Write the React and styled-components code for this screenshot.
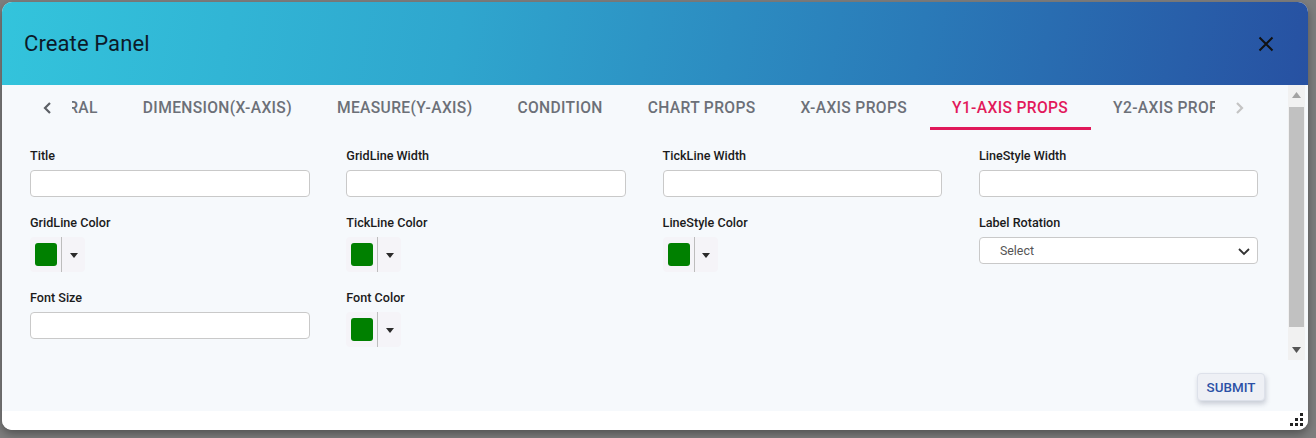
import React, { useLayoutEffect, useRef } from 'react';
import styled, { createGlobalStyle } from 'styled-components';

const GlobalStyle = createGlobalStyle`
  html, body {
    margin: 0;
    padding: 0;
    background: #7e7e7e;
    font-family: Roboto, "Liberation Sans", Arial, sans-serif;
  }
  * { box-sizing: border-box; }
`;

const TABS = [
  'General',
  'Dimension(X-Axis)',
  'Measure(Y-Axis)',
  'Condition',
  'Chart Props',
  'X-Axis Props',
  'Y1-Axis Props',
  'Y2-Axis Props',
];
const ACTIVE_TAB = 6;
// visible part of the first tab, as the scroller was left by the user
const FIRST_TAB_VISIBLE = 48;

const Backdrop = styled.div`
  width: 1316px;
  height: 438px;
  padding: 2px 8px 8px 2px;
`;

const Dialog = styled.div`
  width: 1306px;
  height: 428px;
  border-radius: 10px;
  overflow: hidden;
  background: #fff;
  display: flex;
  flex-direction: column;
  box-shadow: 0 4px 10px rgba(0, 0, 0, 0.35);
`;

const Header = styled.div`
  height: 83px;
  flex: none;
  display: flex;
  align-items: center;
  justify-content: space-between;
  padding: 0 32px 0 22px;
  background: linear-gradient(100deg, #33c4dc 0%, #2fa6ce 35%, #2a7ab8 70%, #2751a2 100%);
`;

const Title = styled.h2`
  margin: 0;
  font-size: 22px;
  font-weight: 400;
  color: #0c1a29;
  letter-spacing: 0.1px;
`;

const CloseButton = styled.button`
  border: 0;
  background: none;
  padding: 0;
  width: 20px;
  height: 20px;
  display: flex;
  align-items: center;
  justify-content: center;
  cursor: pointer;
`;

const Middle = styled.div`
  height: 275px;
  flex: none;
  display: flex;
  padding-right: 3px;
  background: #f6f9fc;
`;

const ScrollArea = styled.div`
  flex: 1;
  padding: 0 28px;
  overflow: hidden;
`;

const Scrollbar = styled.div`
  width: 17px;
  flex: none;
  background: #f1f1f1;
  display: flex;
  flex-direction: column;
  align-items: center;
`;

const ScrollArrow = styled.div`
  height: 20px;
  width: 100%;
  display: flex;
  align-items: center;
  justify-content: center;
  color: ${p => p.$color};
`;

const ScrollThumb = styled.div`
  flex: 1;
  width: 15px;
  margin: 2px 0 13px;
  background: #c1c1c1;
`;

const TabBar = styled.div`
  height: 45px;
  display: flex;
  align-items: stretch;
`;

const TabArrow = styled.button`
  width: ${p => p.$w}px;
  flex: none;
  border: 0;
  background: none;
  padding: 0 0 0 ${p => p.$pl}px;
  display: flex;
  align-items: center;
  justify-content: flex-start;
  color: ${p => (p.$disabled ? '#c4c4c4' : '#5c6066')};
`;

const TabScroller = styled.div`
  flex: 1;
  display: flex;
  overflow-x: auto;
  scrollbar-width: none;
  &::-webkit-scrollbar { display: none; }
`;

const Tab = styled.button`
  flex: none;
  border: 0;
  background: none;
  padding: 3px 22.5px 0;
  font-family: inherit;
  font-size: 15.6px;
  font-weight: 500;
  letter-spacing: 0.35px;
  text-transform: uppercase;
  color: ${p => (p.$active ? '#e2195b' : '#6c7078')};
  border-bottom: 3px solid ${p => (p.$active ? '#e0195a' : 'transparent')};
  white-space: nowrap;
`;

const FormGrid = styled.div`
  display: grid;
  grid-template-columns: repeat(4, 279.5px);
  column-gap: 36.8px;
  row-gap: 18px;
  padding-top: 18px;
  align-items: start;
`;

const Field = styled.div`
  display: flex;
  flex-direction: column;
`;

const Label = styled.label`
  font-size: 12.6px;
  line-height: 15px;
  font-weight: 500;
  color: #1b1b1b;
  margin-bottom: 7px;
`;

const TextInput = styled.input`
  height: 27px;
  width: 100%;
  border: 1px solid #c9c9c9;
  border-radius: 4px;
  background: #fff;
  font-family: inherit;
  font-size: 12px;
  padding: 0 8px;
  outline: none;
`;

const SelectBox = styled.div`
  height: 27px;
  border: 1px solid #c9c9c9;
  border-radius: 4px;
  background: #fff;
  display: flex;
  align-items: center;
  justify-content: space-between;
  padding: 0 6px 0 20px;
  font-size: 12.4px;
  color: #555;
`;

const Picker = styled.div`
  width: 55px;
  height: 35px;
  display: flex;
  align-items: stretch;
  background: #f5f4f8;
  border-radius: 4px;
`;

const SwatchCell = styled.div`
  width: 32px;
  display: flex;
  align-items: center;
  padding-left: 5px;
  border-right: 1px solid #bdbdbd;
`;

const Swatch = styled.div`
  width: 22px;
  height: 23px;
  border-radius: 3px;
  background: ${p => p.$color};
`;

const Caret = styled.div`
  flex: 1;
  display: flex;
  align-items: center;
  justify-content: center;
  &::after {
    content: '';
    border-left: 4.5px solid transparent;
    border-right: 4.5px solid transparent;
    border-top: 5px solid #2b2b2b;
    margin-top: 2px;
  }
`;

const Footer = styled.div`
  height: 51px;
  flex: none;
  display: flex;
  align-items: flex-start;
  justify-content: flex-end;
  padding: 13px 43px 0 0;
  background: #f6f9fc;
`;

const SubmitButton = styled.button`
  width: 68px;
  height: 28px;
  border: 1px solid #dde1ea;
  border-radius: 4px;
  background: #eef0f5;
  font-family: inherit;
  font-size: 13.4px;
  font-weight: 500;
  color: #2b50a6;
  box-shadow: 1px 3px 5px rgba(40, 50, 80, 0.22);
  cursor: pointer;
`;

const BottomStrip = styled.div`
  flex: 1;
  display: flex;
  justify-content: flex-end;
  align-items: flex-end;
  padding: 0 5px 4px 0;
  background: #fff;
`;

const Grip = styled.svg`
  display: block;
`;

function ColorField({ label, color = '#008000' }) {
  return (
    <Field>
      <Label>{label}</Label>
      <Picker>
        <SwatchCell><Swatch $color={color} /></SwatchCell>
        <Caret />
      </Picker>
    </Field>
  );
}

function InputField({ label }) {
  return (
    <Field>
      <Label>{label}</Label>
      <TextInput type="text" />
    </Field>
  );
}

function Chevron({ dir }) {
  const d = dir === 'left' ? 'M10 3 L5 8 L10 13' : 'M6 3 L11 8 L6 13';
  return (
    <svg width="16" height="16" viewBox="0 0 16 16">
      <path d={d} fill="none" stroke="currentColor" strokeWidth="2.2" />
    </svg>
  );
}

export default function App() {
  const scroller = useRef(null);
  useLayoutEffect(() => {
    const el = scroller.current;
    if (el && el.firstChild) {
      el.scrollLeft = el.firstChild.offsetWidth - FIRST_TAB_VISIBLE;
    }
  }, []);

  return (
    <>
      <GlobalStyle />
      <Backdrop>
        <Dialog>
          <Header>
            <Title>Create Panel</Title>
            <CloseButton aria-label="close">
              <svg width="16" height="16" viewBox="0 0 16 16">
                <path d="M1.5 1.5 L14.5 14.5 M14.5 1.5 L1.5 14.5" stroke="#111" strokeWidth="2" />
              </svg>
            </CloseButton>
          </Header>
          <Middle>
            <ScrollArea>
              <TabBar>
                <TabArrow $w={42} $pl={10}>
                  <Chevron dir="left" />
                </TabArrow>
                <TabScroller ref={scroller}>
                  {TABS.map((t, i) => (
                    <Tab key={t} $active={i === ACTIVE_TAB}>{t}</Tab>
                  ))}
                </TabScroller>
                <TabArrow $w={45} $pl={16} $disabled>
                  <Chevron dir="right" />
                </TabArrow>
              </TabBar>
              <FormGrid>
                <InputField label="Title" />
                <InputField label="GridLine Width" />
                <InputField label="TickLine Width" />
                <InputField label="LineStyle Width" />
                <ColorField label="GridLine Color" />
                <ColorField label="TickLine Color" />
                <ColorField label="LineStyle Color" />
                <Field>
                  <Label>Label Rotation</Label>
                  <SelectBox>
                    <span>Select</span>
                    <svg width="14" height="14" viewBox="0 0 14 14">
                      <path d="M2 5 L7 10 L12 5" fill="none" stroke="#333" strokeWidth="1.8" />
                    </svg>
                  </SelectBox>
                </Field>
                <InputField label="Font Size" />
                <ColorField label="Font Color" />
              </FormGrid>
            </ScrollArea>
            <Scrollbar>
              <ScrollArrow $color="#a3a3a3">
                <svg width="9" height="6" viewBox="0 0 9 6"><path d="M0 6 L4.5 0 L9 6 Z" fill="currentColor" /></svg>
              </ScrollArrow>
              <ScrollThumb />
              <ScrollArrow $color="#555">
                <svg width="9" height="6" viewBox="0 0 9 6"><path d="M0 0 L4.5 6 L9 0 Z" fill="currentColor" /></svg>
              </ScrollArrow>
            </Scrollbar>
          </Middle>
          <Footer>
            <SubmitButton>SUBMIT</SubmitButton>
          </Footer>
          <BottomStrip>
            <Grip width="13" height="13" viewBox="0 0 13 13">
              {[[10, 0], [10, 5], [5, 5], [10, 10], [5, 10], [0, 10]].map(([x, y]) => (
                <rect key={`${x}-${y}`} x={x} y={y} width="3" height="3" fill="#222" />
              ))}
            </Grip>
          </BottomStrip>
        </Dialog>
      </Backdrop>
    </>
  );
}
